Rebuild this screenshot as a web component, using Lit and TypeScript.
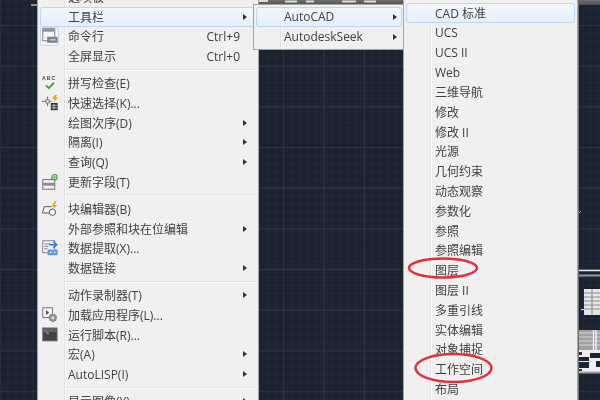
import { LitElement, html, css, svg } from "lit";
import { customElement } from "lit/decorators.js";

type Item = { t: string; k?: string; sub?: boolean; ic?: string; hot?: boolean; sep?: boolean; boxed?: boolean };

const icons: Record<string, unknown> = {
  cmd: svg`<rect x="1" y="1" width="15" height="15" fill="#f4f4f4" stroke="#5e6468"/><rect x="1.500" y="1.500" width="14" height="3" fill="#858c92"/><rect x="6.500" y="11" width="13" height="7.500" fill="#7b8288"/><rect x="10" y="14" width="7" height="1.500" fill="#d5d5d5"/>`,
  abc: svg`<text x="0" y="6.500" font-size="6.500" font-family="Liberation Sans" font-weight="700" letter-spacing="1.300" fill="#444">ABC</text><path d="M5 13l3.500 3.500L15 9.500" fill="none" stroke="#4aa02c" stroke-width="2.400"/>`,
  sel: svg`<path d="M0 8h5M9 8h3M7 2v4M7 10v4" stroke="#666" stroke-width="1.200"/><rect x="5" y="6" width="4" height="4" fill="#f5f5f5" stroke="#666"/><path d="M13 4l3-4h3l-2 3h3l-5 6 1-4h-3z" fill="#eaa520"/><rect x="11" y="10" width="8.500" height="9" fill="#333"/><path d="M12 13h6.500M12 16h6.500M15 11v7" stroke="#ddd"/>`,
  upd: svg`<rect x="1" y="7" width="15" height="12" fill="#eee" stroke="#555"/><rect x="1" y="11" width="15" height="3.500" fill="#8a8a8a"/><circle cx="15.500" cy="4" r="3.300" fill="none" stroke="#3f9a3a" stroke-width="1.400"/><path d="M13.500 4h4M15.500 2v4" stroke="#3f9a3a"/>`,
  blk: svg`<path d="M3 7h9M3 7l-2.500 8h9" fill="none" stroke="#555" stroke-width="1.200"/><circle cx="13" cy="14" r="4" fill="#f2f2f2" stroke="#555" stroke-width="1.200"/><path d="M16 0l-4 7h3l-2 5 6-7h-3l2-5z" fill="#eaa520"/>`,
  ext: svg`<rect x="1" y="1" width="15" height="15" fill="#f3f3f3" stroke="#667"/><path d="M3 5h7M3 8h5M3 11h4" stroke="#567"/><path d="M9 6h8M14 2.500l4.500 3.500-4.500 3.500" fill="none" stroke="#2b7bd0" stroke-width="1.800"/><rect x="7" y="12" width="12.500" height="7" fill="#5b9ad6"/><path d="M10 15.500h2M15 15.500h2" stroke="#fff" stroke-width="1.600"/>`,
  app: svg`<rect x="1" y="1" width="12" height="12" fill="#f5f5f5" stroke="#555"/><path d="M5 4l4 3-4 3z" fill="#555"/><circle cx="13.500" cy="13.500" r="4.500" fill="#999" stroke="#6d6d6d" stroke-width="1.500" stroke-dasharray="1.500 1"/><circle cx="13.500" cy="13.500" r="1.500" fill="#eee"/>`,
  term: svg`<rect x=".5" y="1" width="18.500" height="16.500" fill="#3f4549" stroke="#8b8b8b"/><rect x="1" y="1.500" width="17.500" height="5" fill="#5d6367"/><path d="M4 5l2 1.500M6 8h2.500" stroke="#ddd"/>`,
};

const MAIN: Item[] = [
  { t: "工具栏", sub: true, hot: true },
  { t: "命令行", k: "Ctrl+9", ic: "cmd", boxed: true },
  { t: "全屏显示", k: "Ctrl+0" },
  { t: "", sep: true },
  { t: "拼写检查(E)", ic: "abc" },
  { t: "快速选择(K)...", ic: "sel" },
  { t: "绘图次序(D)", sub: true },
  { t: "隔离(I)", sub: true },
  { t: "查询(Q)", sub: true },
  { t: "更新字段(T)", ic: "upd" },
  { t: "", sep: true },
  { t: "块编辑器(B)", ic: "blk" },
  { t: "外部参照和块在位编辑", sub: true },
  { t: "数据提取(X)...", ic: "ext" },
  { t: "数据链接", sub: true },
  { t: "", sep: true },
  { t: "动作录制器(T)", sub: true },
  { t: "加载应用程序(L)...", ic: "app" },
  { t: "运行脚本(R)...", ic: "term" },
  { t: "宏(A)", sub: true },
  { t: "AutoLISP(I)", sub: true },
  { t: "", sep: true },
  { t: "显示图像(Y)", sub: true },
];

const SECOND: Item[] = [
  { t: "AutoCAD", sub: true, hot: true },
  { t: "AutodeskSeek", sub: true },
];

const THIRD = ["CAD 标准", "UCS", "UCS II", "Web", "三维导航", "修改", "修改 II", "光源", "几何约束", "动态观察", "参数化", "参照", "参照编辑", "图层", "图层 II", "多重引线", "实体编辑", "对象捕捉", "工作空间", "布局"];

@customElement("app-root")
export class AppRoot extends LitElement {
  static styles = css`
    :host { display: block; width: 600px; height: 400px; overflow: hidden; }
    .canvas {
      position: relative; width: 600px; height: 400px; overflow: hidden; background-color: #1b2230;
      background-image:
        linear-gradient(#2c3344 1px, transparent 1px),
        linear-gradient(90deg, #2c3344 1px, transparent 1px),
        linear-gradient(#222938 1px, transparent 1px),
        linear-gradient(90deg, #222938 1px, transparent 1px);
      background-size: 40.700px 40.700px, 40.500px 40.500px, 8.140px 8.140px, 8.100px 8.100px;
      background-position: 0 25px, 40px 0, 0 25px, 40px 0;
      font-family: "Open Sans", "Noto Sans CJK SC", sans-serif;
      font-size: 12px; color: #404040; filter: blur(0.35px);
    }
    .topbar { position: absolute; left: 250px; right: 0; top: 0; height: 5px; background: linear-gradient(#6e6e6e, #4d4f52); }
    .tab { position: absolute; left: 31px; top: 4px; width: 7px; height: 2px; background: #8e9196; }
    .menu { position: absolute; background: #f0f0f0; box-shadow: 0 0 0 1px #a4a4a4; display: flex; flex-direction: column; padding: 0 2px; box-sizing: border-box; }
    .m1 { left: 38px; top: -13px; width: 220px; height: 430px; }
    .m2 { left: 254px; top: 5px; width: 150px; height: 44px; padding-top: 2px; z-index: 2; }
    .m3 { left: 404px; top: -6px; width: 173px; height: 420px; z-index: 3; padding-top: 9px; box-shadow: 0 0 0 1px #a4a4a4, 1px 0 0 1px #707070; }
    .gutter { position: absolute; top: 0; bottom: 0; left: 26px; width: 1px; background: #e2e2e2; box-shadow: 1px 0 0 #fafafa; }
    .row { position: relative; height: 19.800px; display: flex; align-items: center; flex: none; box-sizing: border-box; }
    .row.hot { background: linear-gradient(#f4f8fd, #e4eefa); box-shadow: inset 0 0 0 1px #bcd8f3; border-radius: 3px; }
    .ic { width: 19px; height: 100%; margin-right: 7px; flex: none; display: flex; align-items: center; justify-content: center; box-sizing: border-box; }
    .ic svg { width: 16px; height: 16px; overflow: visible; }
    .ic.boxed { box-shadow: inset 0 0 0 1px #bcd8f3; background: #f2f6fb; border-radius: 3px; }
    .label { margin-left: 2px; flex: 1; white-space: nowrap; z-index: 1; }
    .m3 .label { margin-left: 3px; }
    .key { margin-right: 16px; }
    .arrow { width: 0; height: 0; border-left: 4px solid #333; border-top: 3.500px solid transparent; border-bottom: 3.500px solid transparent; margin-right: 9px; }
    .m2 .arrow { margin-right: 5px; }
    .sep { position: relative; flex: none; height: 2px; margin: 2.500px 0 2.500px 25px; background: #e3e3e3; border-bottom: 1px solid #fafafa; box-sizing: border-box; }
    .overlay { position: absolute; left: 0; top: 0; width: 600px; height: 400px; z-index: 5; pointer-events: none; }
    .sheets { position: absolute; left: 0; top: 0; width: 600px; height: 400px; }
  `;

  private renderItems(items: Item[]) {
    return items.map((i) =>
      i.sep
        ? html`<div class="sep"></div>`
        : html`<div class="row ${i.hot ? "hot" : ""}">
            <div class="ic ${i.boxed ? "boxed" : ""}">${i.ic ? html`<svg viewBox="0 0 20 20">${icons[i.ic]}</svg>` : ""}</div>
            <div class="label">${i.t}</div>
            ${i.k ? html`<div class="key">${i.k}</div>` : ""}
            ${i.sub ? html`<div class="arrow"></div>` : ""}
          </div>`
    );
  }

  render() {
    return html`<div class="canvas">
      <div class="topbar"></div>
      <div class="tab"></div>
      <svg class="sheets" viewBox="0 0 600 400">
        <path d="M258 1h10M285 1.500h12M306 1.500h8M342 1.500h14M364 1.500h12" stroke="#ddd" stroke-width="2"/>
        <path d="M578 270.500h22" stroke="#e8e8e8" stroke-width="1.500"/>
        <path d="M578 275.500h22" stroke="#9a9a9a" stroke-width="2"/>
        <rect x="584" y="289" width="16" height="26" fill="#e6e6e6"/>
        <path d="M584 293h16M584 297h16M584 301h16M584 305h16M584 309h16M592 289v26" stroke="#8a8a8a"/>
        <path d="M581 309.500h3" stroke="#ddd"/>
        <rect x="577" y="330" width="23" height="20" fill="#9ea0a3"/>
        <path d="M577 333h23M577 337h23M577 341h23M577 345h23" stroke="#d5d5d5"/>
        <path d="M593.500 330v21M596 330v21" stroke="#fff" stroke-width="1.200"/>
        <rect x="577" y="350" width="23" height="22" fill="#eeeeee"/>
        <rect x="578" y="357" width="11" height="4" fill="#1b2230"/>
        <rect x="590" y="353" width="10" height="5" fill="#1b2230"/>
        <rect x="578" y="362" width="11" height="6" fill="#1b2230"/>
        <rect x="596" y="361" width="4" height="6" fill="#1b2230"/>
        <rect x="579" y="352" width="3" height="3" fill="#333"/>
        <rect x="579" y="369" width="3" height="2" fill="#333"/>
        <path d="M577 372.500h23" stroke="#a0a0a0" stroke-width="2"/>
        <path d="M577 215l4-4" stroke="#aaa"/>
      </svg>
      <div class="menu m1"><div class="gutter"></div>
        <div class="row"><div class="ic"></div><div class="label">选项板</div><div class="arrow"></div></div>
        ${this.renderItems(MAIN)}
      </div>
      <div class="menu m2"><div class="gutter"></div>${this.renderItems(SECOND)}</div>
      <div class="menu m3"><div class="gutter"></div>
        ${this.renderItems(THIRD.map((t, n) => ({ t, hot: n === 0 })))}
      </div>
      <svg class="overlay" viewBox="0 0 600 400">
        <ellipse cx="443" cy="268" rx="34" ry="9.500" fill="none" stroke="#e0313c" stroke-width="2.500"/>
        <ellipse cx="453.500" cy="368" rx="38" ry="14" fill="none" stroke="#e0313c" stroke-width="2.500"/>
      </svg>
    </div>`;
  }
}
